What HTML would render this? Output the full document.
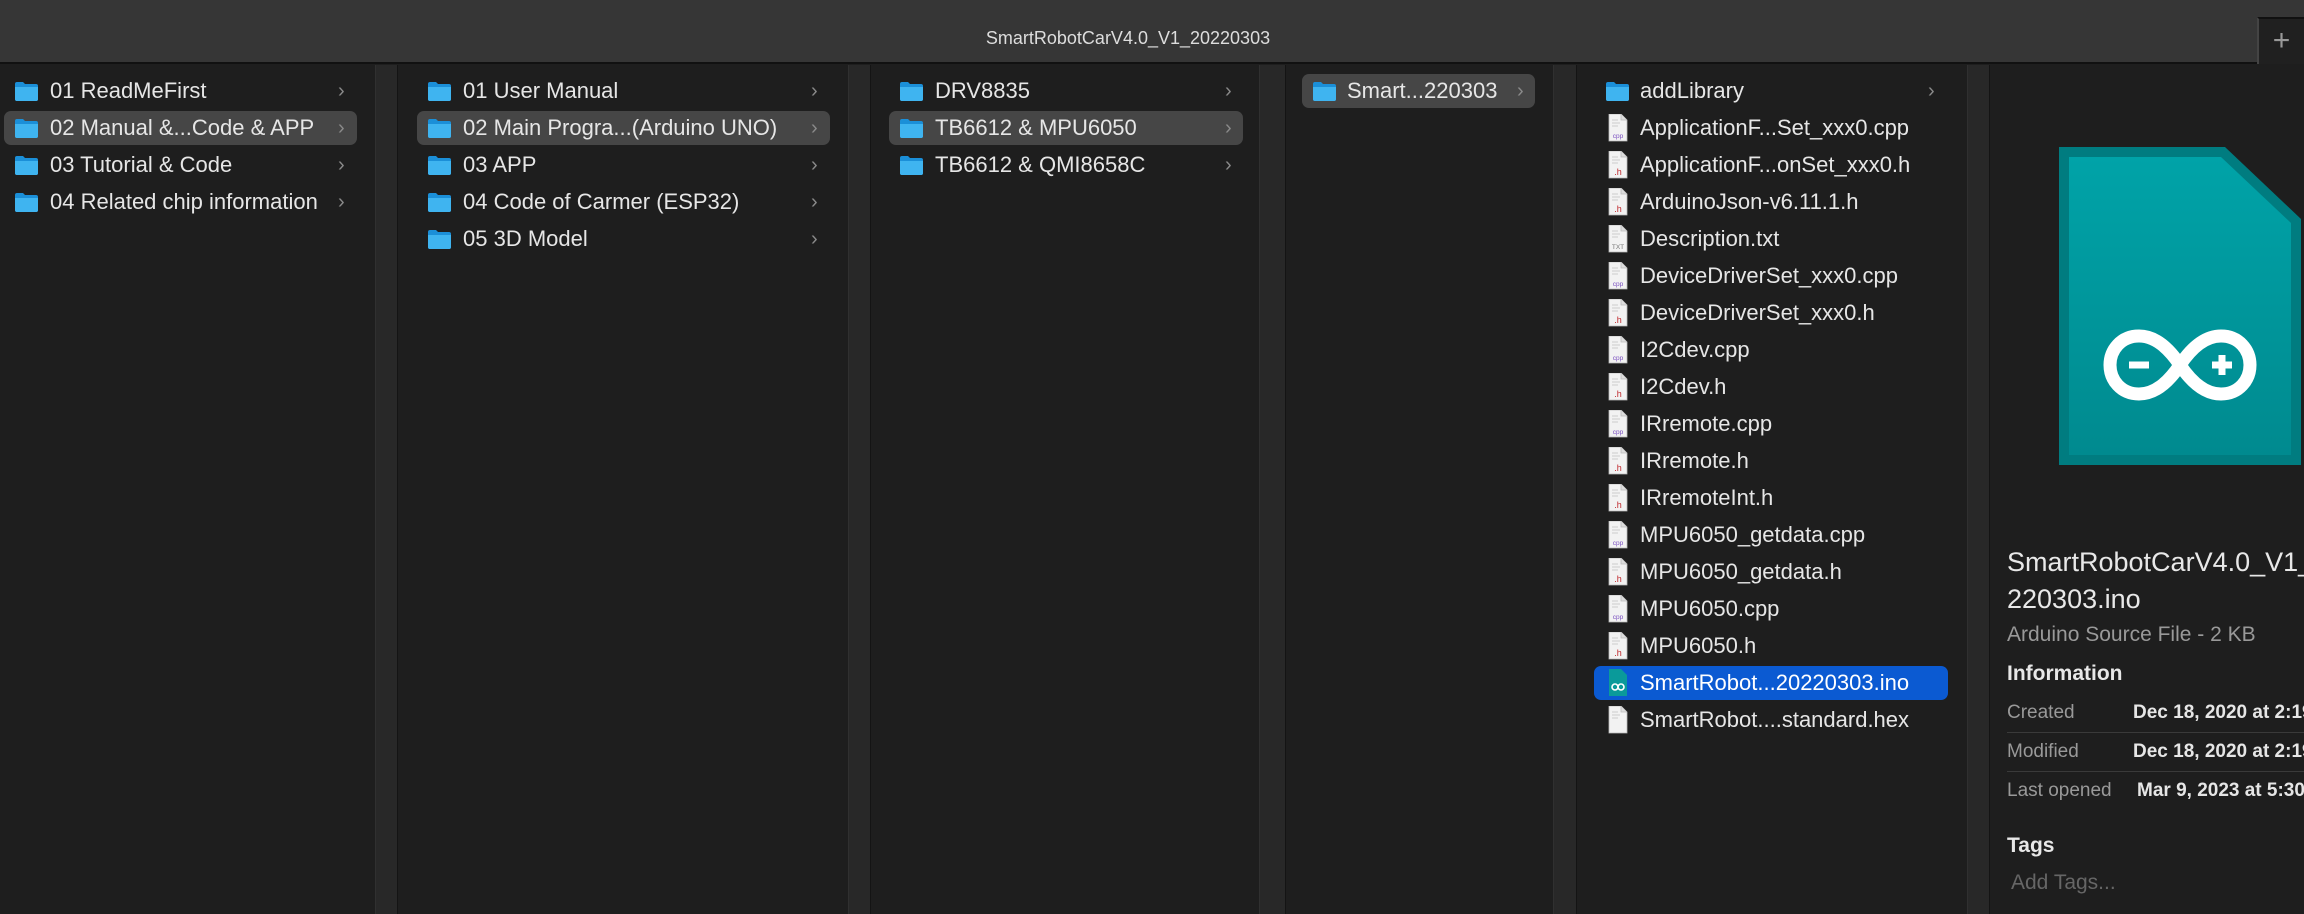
<!DOCTYPE html>
<html><head><meta charset="utf-8"><style>
*{margin:0;padding:0;box-sizing:border-box}
body{width:2304px;height:914px;background:#1e1e1e;overflow:hidden;font-family:"Liberation Sans",sans-serif;color:#e6e6e6;position:relative}
.tb{position:absolute;left:0;top:0;width:2304px;height:64px;background:#363636;border-bottom:2px solid #111}
.title{position:absolute;top:28px;left:0;width:2256px;text-align:center;font-size:18px;color:#ddd}
.plus{position:absolute;left:2257px;top:17px;width:47px;height:47px;background:#202020;border-left:2px solid #444;border-top:2px solid #111;color:#999;font-size:30px;text-align:center;line-height:44px}
.gap{position:absolute;top:65px;height:849px;background:#282828;border-left:1px solid #303030;border-right:1px solid #141414}
.row{position:absolute;height:34px;font-size:22px;line-height:34px;white-space:nowrap}
.hl{background:#464646;border-radius:7px}
.sel{background:#0b5ad2;border-radius:7px;color:#fff}
.fold{position:absolute;width:23px;height:19px;top:8px}
.fi{position:absolute;top:3px;width:20px;height:28px}
.chev{position:absolute;top:0;color:#8a8a8a;font-size:20px}
.lbl{position:absolute;top:0}
.meta{position:absolute;font-size:19px;white-space:nowrap}
</style></head><body>
<div class="tb"><div class="title">SmartRobotCarV4.0_V1_20220303</div><div class="plus">+</div></div>
<div class="gap" style="left:375px;width:23px"></div>
<div class="gap" style="left:848px;width:23px"></div>
<div class="gap" style="left:1259px;width:27px"></div>
<div class="gap" style="left:1553px;width:24px"></div>
<div class="gap" style="left:1967px;width:23px"></div>

<svg width="0" height="0" style="position:absolute"><defs>
<symbol id="fd" viewBox="0 0 23 19"><path d="M0 2 Q0 0 2 0 H8 L10 2 H21 Q23 2 23 4 V17 Q23 19 21 19 H2 Q0 19 0 17Z" fill="#1b8fd8"/><path d="M0 5 H23 V17 Q23 19 21 19 H2 Q0 19 0 17Z" fill="#3fb4f0"/></symbol>
<symbol id="pg" viewBox="0 0 20 28"><path d="M1 0 H13 L19 6 V27 H1Z" fill="#f2f2f2" stroke="#bbb" stroke-width="0.8"/><path d="M13 0 V6 H19" fill="#ddd" stroke="#bbb" stroke-width="0.8"/><path d="M4 6h6M4 9h8M4 12h6" stroke="#ccc" stroke-width="1"/></symbol>
<linearGradient id="tg" x1="0" y1="0" x2="0" y2="1"><stop offset="0" stop-color="#00a3a8"/><stop offset="1" stop-color="#008a8f"/></linearGradient>
</defs></svg>

<!-- col1 -->
<div class="row" style="left:4px;top:74px;width:353px"><svg class="fold" style="left:11px"><use href="#fd"/></svg><span class="lbl" style="left:46px">01 ReadMeFirst</span><span class="chev" style="left:334px">›</span></div>
<div class="row hl" style="left:4px;top:111px;width:353px"><svg class="fold" style="left:11px"><use href="#fd"/></svg><span class="lbl" style="left:46px">02 Manual &amp;...Code &amp; APP</span><span class="chev" style="left:334px">›</span></div>
<div class="row" style="left:4px;top:148px;width:353px"><svg class="fold" style="left:11px"><use href="#fd"/></svg><span class="lbl" style="left:46px">03 Tutorial &amp; Code</span><span class="chev" style="left:334px">›</span></div>
<div class="row" style="left:4px;top:185px;width:353px"><svg class="fold" style="left:11px"><use href="#fd"/></svg><span class="lbl" style="left:46px">04 Related chip information</span><span class="chev" style="left:334px">›</span></div>

<!-- col2 -->
<div class="row" style="left:417px;top:74px;width:413px"><svg class="fold" style="left:11px"><use href="#fd"/></svg><span class="lbl" style="left:46px">01 User Manual</span><span class="chev" style="left:394px">›</span></div>
<div class="row hl" style="left:417px;top:111px;width:413px"><svg class="fold" style="left:11px"><use href="#fd"/></svg><span class="lbl" style="left:46px">02 Main Progra...(Arduino UNO)</span><span class="chev" style="left:394px">›</span></div>
<div class="row" style="left:417px;top:148px;width:413px"><svg class="fold" style="left:11px"><use href="#fd"/></svg><span class="lbl" style="left:46px">03 APP</span><span class="chev" style="left:394px">›</span></div>
<div class="row" style="left:417px;top:185px;width:413px"><svg class="fold" style="left:11px"><use href="#fd"/></svg><span class="lbl" style="left:46px">04 Code of Carmer (ESP32)</span><span class="chev" style="left:394px">›</span></div>
<div class="row" style="left:417px;top:222px;width:413px"><svg class="fold" style="left:11px"><use href="#fd"/></svg><span class="lbl" style="left:46px">05 3D Model</span><span class="chev" style="left:394px">›</span></div>

<!-- col3 -->
<div class="row" style="left:889px;top:74px;width:354px"><svg class="fold" style="left:11px"><use href="#fd"/></svg><span class="lbl" style="left:46px">DRV8835</span><span class="chev" style="left:336px">›</span></div>
<div class="row hl" style="left:889px;top:111px;width:354px"><svg class="fold" style="left:11px"><use href="#fd"/></svg><span class="lbl" style="left:46px">TB6612 &amp; MPU6050</span><span class="chev" style="left:336px">›</span></div>
<div class="row" style="left:889px;top:148px;width:354px"><svg class="fold" style="left:11px"><use href="#fd"/></svg><span class="lbl" style="left:46px">TB6612 &amp; QMI8658C</span><span class="chev" style="left:336px">›</span></div>

<!-- col4 -->
<div class="row hl" style="left:1302px;top:74px;width:233px"><svg class="fold" style="left:11px"><use href="#fd"/></svg><span class="lbl" style="left:45px">Smart...220303</span><span class="chev" style="left:215px">›</span></div>

<!-- col5 -->
<div class="row" style="left:1594px;top:74px;width:354px"><svg class="fold" style="left:12px"><use href="#fd"/></svg><span class="lbl" style="left:46px">addLibrary</span><span class="chev" style="left:334px">›</span></div>
<div id="c5"></div>

<!-- preview -->
<svg style="position:absolute;left:2059px;top:147px" width="245" height="320" viewBox="0 0 245 320">
<path d="M0 0 H166 L242 72 V318 H0Z" fill="#007c80"/>
<path d="M10 10 H162 L232 76 V308 H10Z" fill="url(#tg)"/>
<g transform="translate(121,218)" fill="none" stroke="#fff" stroke-width="13">
<path d="M0 0 C-12 -18 -26 -29 -41 -29 C-59 -29 -70 -15 -70 0 C-70 15 -59 29 -41 29 C-26 29 -12 18 0 0 C12 -18 26 -29 41 -29 C59 -29 70 -15 70 0 C70 15 59 29 41 29 C26 29 12 18 0 0Z"/>
<path d="M-51 0 H-31 M32 0 H52 M42 -10 V10" stroke-width="7"/>
</g>
</svg>
<div class="meta" style="left:2007px;top:547px;font-size:27px;color:#e8e8e8">SmartRobotCarV4.0_V1_</div>
<div class="meta" style="left:2007px;top:584px;font-size:27px;color:#e8e8e8">220303.ino</div>
<div class="meta" style="left:2007px;top:623px;font-size:21px;color:#999">Arduino Source File - 2 KB</div>
<div class="meta" style="left:2007px;top:662px;font-size:21px;font-weight:bold;color:#e8e8e8">Information</div>
<div class="meta" style="left:2007px;top:702px;color:#999">Created</div><div class="meta" style="left:2133px;top:702px;font-weight:bold">Dec 18, 2020 at 2:19 PM</div>
<div style="position:absolute;left:2007px;top:732px;width:297px;height:1px;background:#3a3a3a"></div>
<div class="meta" style="left:2007px;top:741px;color:#999">Modified</div><div class="meta" style="left:2133px;top:741px;font-weight:bold">Dec 18, 2020 at 2:19 PM</div>
<div style="position:absolute;left:2007px;top:771px;width:297px;height:1px;background:#3a3a3a"></div>
<div class="meta" style="left:2007px;top:780px;color:#999">Last opened</div><div class="meta" style="left:2137px;top:780px;font-weight:bold">Mar 9, 2023 at 5:30 PM</div>
<div class="meta" style="left:2007px;top:834px;font-size:21px;font-weight:bold;color:#e8e8e8">Tags</div>
<div class="meta" style="left:2011px;top:871px;font-size:21px;color:#666">Add Tags...</div>

<script>
var f=[["ApplicationF...Set_xxx0.cpp","cpp"],["ApplicationF...onSet_xxx0.h","h"],["ArduinoJson-v6.11.1.h","h"],["Description.txt","txt"],["DeviceDriverSet_xxx0.cpp","cpp"],["DeviceDriverSet_xxx0.h","h"],["I2Cdev.cpp","cpp"],["I2Cdev.h","h"],["IRremote.cpp","cpp"],["IRremote.h","h"],["IRremoteInt.h","h"],["MPU6050_getdata.cpp","cpp"],["MPU6050_getdata.h","h"],["MPU6050.cpp","cpp"],["MPU6050.h","h"],["SmartRobot...20220303.ino","ino"],["SmartRobot....standard.hex","hex"]];
var h="";
f.forEach(function(e,i){
 var top=111+i*37;var cls=e[1]=="ino"?"row sel":"row";
 var ic;
 if(e[1]=="ino"){ic='<svg class="fi" style="left:14px" viewBox="0 0 20 28"><path d="M1 0 H13 L19 6 V27 H1Z" fill="#0a9a9a"/><g fill="none" stroke="#fff" stroke-width="1.6"><circle cx="7" cy="18" r="3"/><circle cx="13" cy="18" r="3"/></g></svg>';}
 else{var lab="",col="";if(e[1]=="cpp"){lab="cpp";col="#7a4fc0"}else if(e[1]=="h"){lab=".h";col="#c0282d"}else if(e[1]=="txt"){lab="TXT";col="#777"}
 ic='<svg class="fi" style="left:14px" viewBox="0 0 20 28"><use href="#pg"/>'+(lab?'<text x="10" y="24" font-size="'+(e[1]=="h"?9:6.5)+'" text-anchor="middle" fill="'+col+'" font-family="Liberation Sans">'+lab+'</text>':'')+'</svg>';}
 h+='<div class="'+cls+'" style="left:1594px;top:'+top+'px;width:354px">'+ic+'<span class="lbl" style="left:46px">'+e[0]+'</span></div>';
});
document.getElementById("c5").outerHTML=h;
</script>
</body></html>
